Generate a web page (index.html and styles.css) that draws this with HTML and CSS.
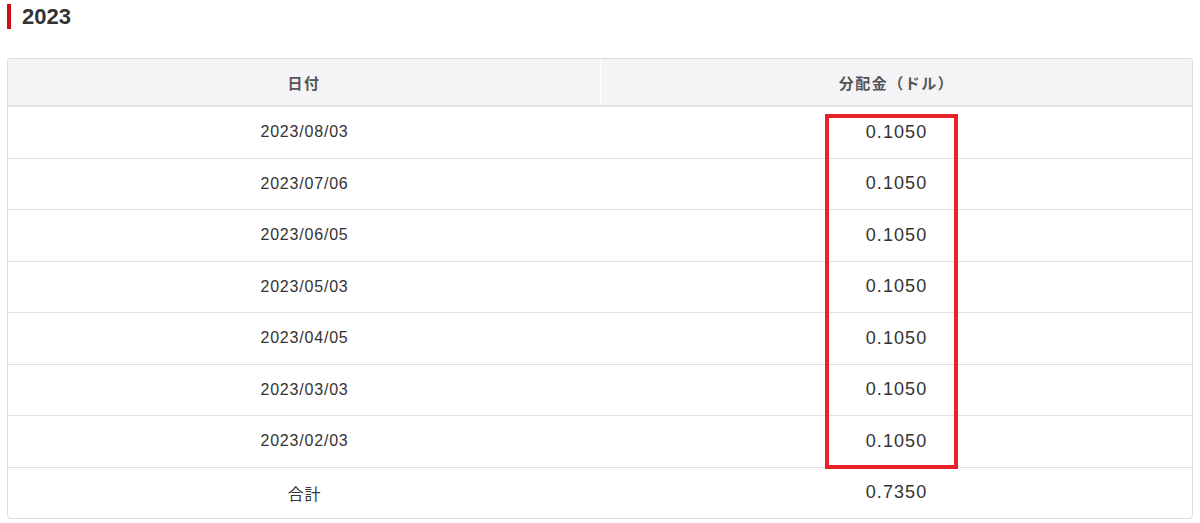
FILE: index.html
```html
<!DOCTYPE html>
<html lang="ja">
<head>
<meta charset="utf-8">
<link rel="stylesheet" href="styles.css">
</head>
<body>
<h2 class="year-title">2023</h2>
<div class="card">
  <div class="row head">
    <div class="cell">日付</div>
    <div class="cell">分配金（ドル）</div>
  </div>
  <div class="row"><div class="cell date">2023/08/03</div><div class="cell val">0.1050</div></div>
  <div class="row"><div class="cell date">2023/07/06</div><div class="cell val">0.1050</div></div>
  <div class="row"><div class="cell date">2023/06/05</div><div class="cell val">0.1050</div></div>
  <div class="row"><div class="cell date">2023/05/03</div><div class="cell val">0.1050</div></div>
  <div class="row"><div class="cell date">2023/04/05</div><div class="cell val">0.1050</div></div>
  <div class="row"><div class="cell date">2023/03/03</div><div class="cell val">0.1050</div></div>
  <div class="row"><div class="cell date">2023/02/03</div><div class="cell val">0.1050</div></div>
  <div class="row total"><div class="cell date">合計</div><div class="cell val">0.7350</div></div>
  <div class="highlight"></div>
</div>
</body>
</html>
```
FILE: styles.css
```css
html, body {
  margin: 0;
  background: #fff;
}
body {
  padding: 4px 7px 0 7px;
  font-family: "Liberation Sans", Arial, "Noto Sans CJK JP", sans-serif;
  color: #333;
}
.year-title {
  margin: 0;
  height: 25px;
  line-height: 25px;
  border-left: 4px solid #c8101a;
  padding-left: 11px;
  font-size: 22px;
  font-weight: bold;
  color: #333;
}
.card {
  position: relative;
  margin-top: 29px;
  border: 1px solid #dcdcdc;
  border-radius: 4px;
  overflow: hidden;
}
.row {
  display: grid;
  grid-template-columns: 593px 1fr;
  height: 51.5px;
  box-sizing: border-box;
  border-bottom: 1px solid #e0e0e0;
}
.row.total {
  border-bottom: none;
  height: 50.5px;
}
.row.head {
  height: 48px;
  border-bottom: 2px solid #e2e2e4;
  background: #f4f4f6;
}
.cell {
  display: flex;
  align-items: center;
  justify-content: center;
}
.head .cell {
  font-size: 15px;
  font-weight: bold;
  color: #555;
  letter-spacing: 0.1em;
}
.head .cell:first-child {
  border-right: 1px solid #fff;
}
.date {
  font-size: 16px;
  letter-spacing: 0.05em;
}
.val {
  font-size: 18px;
  letter-spacing: 0.06em;
}
.highlight {
  position: absolute;
  left: 817px;
  top: 55px;
  width: 133px;
  height: 355px;
  box-sizing: border-box;
  border: 4px solid #e8222b;
}
```
